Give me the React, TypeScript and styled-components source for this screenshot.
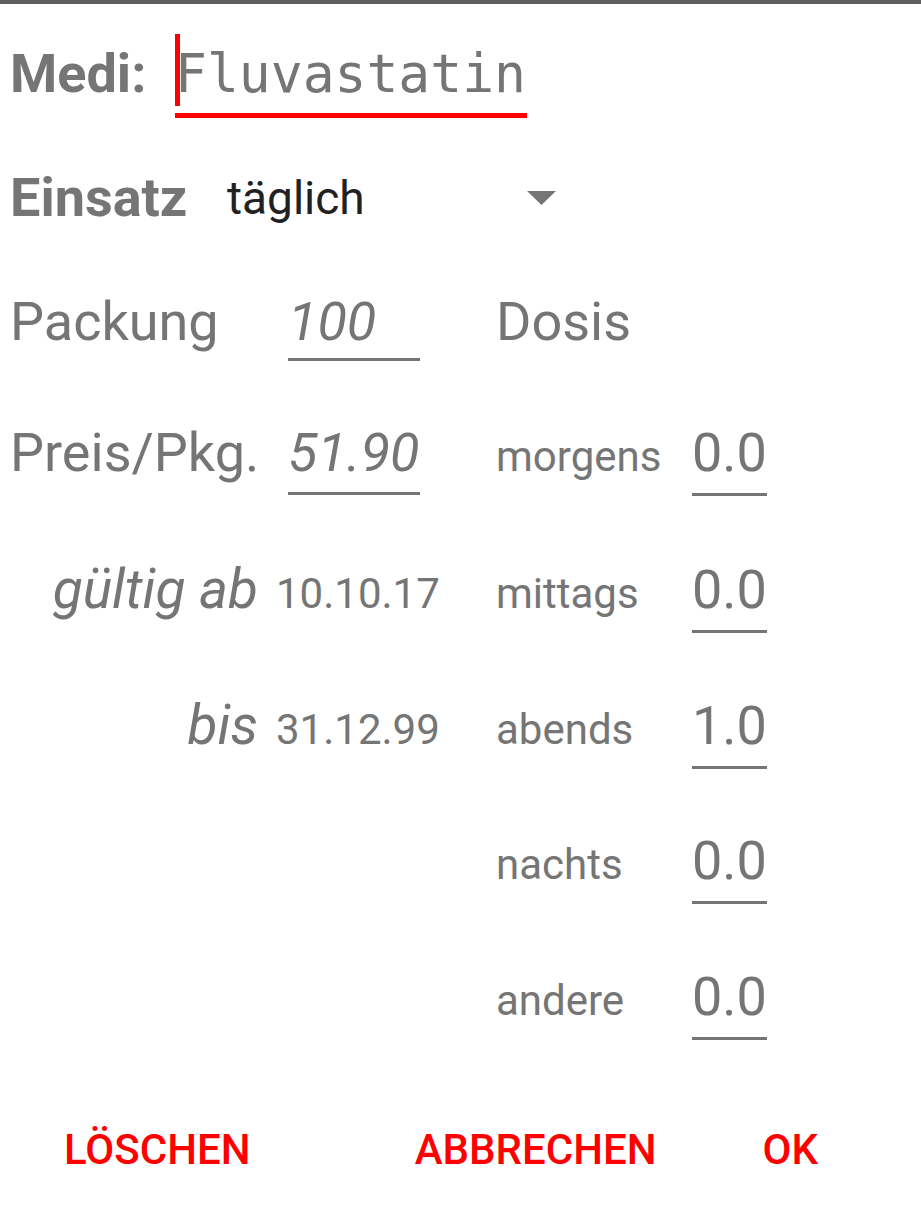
import React from "react";
import styled, { createGlobalStyle } from "styled-components";

const GRAY = "#757575";
const RED = "#ff0000";

const GlobalStyle = createGlobalStyle`
  html, body { margin: 0; padding: 0; background: #ffffff; }
  body { font-family: Roboto, "Noto Sans", "Liberation Sans", sans-serif; }
`;

const Screen = styled.div`
  box-sizing: border-box;
  width: 921px;
  min-height: 1225px;
  border-top: 4px solid #5f5f5f;
  padding-left: 10px;
  color: ${GRAY};
  background: #ffffff;
`;

const NameRow = styled.div`
  display: flex;
  align-items: baseline;
  margin-top: 35px;
`;

const HeadLabel = styled.div<{ $size: number; $width: number }>`
  flex: none;
  width: ${(p) => p.$width}px;
  font-size: ${(p) => p.$size}px;
  font-weight: 700;
  line-height: 1;
  color: ${GRAY};
`;

const NameField = styled.div`
  position: relative;
  box-sizing: border-box;
  width: 352px;
  padding: 0 0 4px 0;
  border-bottom: 5px solid ${RED};
  font-family: "DejaVu Sans Mono", "Liberation Mono", monospace;
  font-size: 53px;
  line-height: 70px;
  color: ${GRAY};
`;

const Caret = styled.span`
  position: absolute;
  left: 0;
  top: -5px;
  width: 5px;
  height: 72px;
  background: ${RED};
`;

const SelectRow = styled.div`
  display: flex;
  align-items: center;
  height: 64px;
  margin-top: 48px;
`;

const Spinner = styled.div`
  display: flex;
  align-items: center;
  justify-content: space-between;
  width: 329px;
`;

const SpinnerText = styled.span`
  font-size: 46px;
  line-height: 1;
  color: #212121;
`;

const DetailGrid = styled.div`
  display: grid;
  grid-template-columns: 266px 220px 196px auto;
  grid-template-rows: 131px repeat(5, 136px);
  align-items: baseline;
  margin-top: 62px;
`;

const Label = styled.div<{ $col?: number }>`
  ${(p) => (p.$col ? `grid-column-start: ${p.$col};` : "")}
  font-size: 54px;
  line-height: 60px;
  white-space: nowrap;
`;

const RangeLabel = styled.div<{ $col?: number }>`
  ${(p) => (p.$col ? `grid-column-start: ${p.$col};` : "")}
  justify-self: end;
  padding-right: 18px;
  font-size: 55px;
  font-style: italic;
  line-height: 60px;
  white-space: nowrap;
`;

const SmallText = styled.div<{ $col?: number }>`
  ${(p) => (p.$col ? `grid-column-start: ${p.$col};` : "")}
  font-size: 42px;
  line-height: 60px;
  white-space: nowrap;
`;

const Field = styled.div<{
  $italic?: boolean;
  $minWidth?: number;
  $indent?: number;
  $pad?: number;
}>`
  justify-self: start;
  box-sizing: border-box;
  min-width: ${(p) => p.$minWidth ?? 0}px;
  margin-left: ${(p) => p.$indent ?? 0}px;
  padding-bottom: ${(p) => p.$pad ?? 9}px;
  border-bottom: 3px solid ${GRAY};
  font-size: 54px;
  font-style: ${(p) => (p.$italic ? "italic" : "normal")};
  line-height: 60px;
  white-space: nowrap;
`;

const ButtonBar = styled.div`
  display: flex;
  align-items: baseline;
  margin-top: 17px;
  padding-left: 54px;
  padding-right: 103px;
`;

const Spacer = styled.div`
  flex: 1;
`;

const TextButton = styled.button<{ $gap?: number }>`
  margin-left: ${(p) => p.$gap ?? 0}px;
  padding: 0;
  border: 0;
  background: none;
  font-family: Roboto, "Noto Sans", sans-serif;
  font-size: 42px;
  font-weight: 500;
  line-height: 60px;
  color: ${RED};
  text-transform: uppercase;
  cursor: pointer;
`;

const Arrow = () => (
  <svg width="29" height="14" viewBox="0 0 29 14" aria-hidden="true">
    <polygon points="0,0 29,0 14.5,14" fill={GRAY} />
  </svg>
);

const doses: Array<[string, string]> = [
  ["morgens", "0.0"],
  ["mittags", "0.0"],
  ["abends", "1.0"],
  ["nachts", "0.0"],
  ["andere", "0.0"],
];

export default function App() {
  return (
    <>
      <GlobalStyle />
      <Screen>
        <NameRow>
          <HeadLabel $size={54} $width={165}>Medi:</HeadLabel>
          <NameField>
            <Caret />
            Fluvastatin
          </NameField>
        </NameRow>

        <SelectRow>
          <HeadLabel $size={54} $width={217}>Einsatz</HeadLabel>
          <Spinner>
            <SpinnerText>täglich</SpinnerText>
            <Arrow />
          </Spinner>
        </SelectRow>

        <DetailGrid>
          <Label $col={1}>Packung</Label>
          <Field $italic $minWidth={132} $indent={12} $pad={6}>100</Field>
          <Label>Dosis</Label>

          <Label $col={1}>Preis/Pkg.</Label>
          <Field $italic $indent={12}>51.90</Field>
          <SmallText>{doses[0][0]}</SmallText>
          <Field $pad={10}>{doses[0][1]}</Field>

          <RangeLabel $col={1}>gültig ab</RangeLabel>
          <SmallText>10.10.17</SmallText>
          <SmallText>{doses[1][0]}</SmallText>
          <Field $pad={10}>{doses[1][1]}</Field>

          <RangeLabel $col={1}>bis</RangeLabel>
          <SmallText>31.12.99</SmallText>
          <SmallText>{doses[2][0]}</SmallText>
          <Field $pad={10}>{doses[2][1]}</Field>

          <SmallText $col={3}>{doses[3][0]}</SmallText>
          <Field $pad={10}>{doses[3][1]}</Field>

          <SmallText $col={3}>{doses[4][0]}</SmallText>
          <Field $pad={10}>{doses[4][1]}</Field>
        </DetailGrid>

        <ButtonBar>
          <TextButton>Löschen</TextButton>
          <Spacer />
          <TextButton>Abbrechen</TextButton>
          <TextButton $gap={106}>OK</TextButton>
        </ButtonBar>
      </Screen>
    </>
  );
}
